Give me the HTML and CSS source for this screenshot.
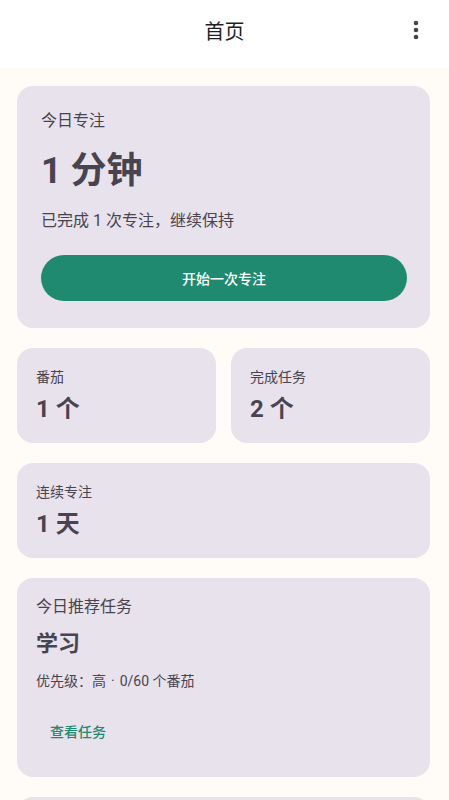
FILE: index.html
```html
<!DOCTYPE html>
<html>
<head>
<title>首页</title>
<link rel="stylesheet" href="styles.css">
</head>
<body>

<header class="topbar">
  <h1 class="topbar-title">首页</h1>
  <button class="menu-btn" aria-label="更多">
    <svg width="24" height="24" viewBox="0 0 24 24">
      <circle cx="12" cy="5" r="2.3" fill="#444"/>
      <circle cx="12" cy="12" r="2.3" fill="#444"/>
      <circle cx="12" cy="19" r="2.3" fill="#444"/>
    </svg>
  </button>
</header>

<main class="content">
  <section class="card card-focus">
    <div class="label-lg">今日专注</div>
    <div class="value-xl">1 分钟</div>
    <div class="note">已完成 1 次专注，继续保持</div>
    <button class="primary-btn">开始一次专注</button>
  </section>

  <div class="stat-row">
    <section class="card card-stat">
      <div class="label-sm">番茄</div>
      <div class="value-md">1 个</div>
    </section>
    <section class="card card-stat">
      <div class="label-sm">完成任务</div>
      <div class="value-md">2 个</div>
    </section>
  </div>

  <section class="card card-stat">
    <div class="label-sm">连续专注</div>
    <div class="value-md">1 天</div>
  </section>

  <section class="card card-task">
    <div class="label-lg">今日推荐任务</div>
    <div class="task-name">学习</div>
    <div class="meta">优先级：高<span class="dot">·</span>0/60 个番茄</div>
    <button class="text-btn">查看任务</button>
  </section>

  <section class="card card-next"></section>
</main>

</body>
</html>
```

FILE: styles.css
```css
body {
  margin: 0;
  background: #fffcf7;
  font-family: Roboto, "Noto Sans CJK SC", sans-serif;
  color: #48444f;
}

.topbar {
  height: 68px;
  background: #ffffff;
  display: flex;
  align-items: center;
  justify-content: center;
  position: relative;
}

.topbar-title {
  margin: 0 0 8px;
  font-size: 20px;
  font-weight: 400;
  color: #1f1f1f;
}

.menu-btn {
  position: absolute;
  right: 21px;
  top: 18px;
  border: 0;
  padding: 0;
  background: none;
  display: flex;
}

.content {
  padding: 18px 19px 0 17px;
  display: flex;
  flex-direction: column;
  gap: 20px;
}

.card {
  background: #e8e2ec;
  border-radius: 16px;
  display: flex;
  flex-direction: column;
}

.card-focus {
  padding: 24px 23px 27px 24px;
}

.card-stat {
  padding: 19px 19px 18px 19px;
}

.card-task {
  padding: 18px 19px 26px 19px;
}

.card-next {
  height: 60px;
}

.stat-row {
  display: grid;
  grid-template-columns: 1fr 1fr;
  gap: 15px;
}

.label-lg {
  font-size: 16px;
  line-height: 22px;
}

.label-sm {
  font-size: 14px;
  line-height: 20px;
}

.value-xl {
  margin-top: 17px;
  font-size: 36px;
  line-height: 44px;
  font-weight: 700;
}

.value-md {
  margin-top: 6px;
  font-size: 24px;
  line-height: 32px;
  font-weight: 700;
}

.task-name {
  margin-top: 11px;
  font-size: 22px;
  line-height: 30px;
  font-weight: 700;
}

.note {
  margin-top: 17px;
  font-size: 16px;
  line-height: 22px;
}

.meta {
  margin-top: 12px;
  font-size: 14px;
  line-height: 20px;
}

.dot {
  margin: 0 5px;
}

.primary-btn {
  margin-top: 23px;
  height: 46px;
  border: 0;
  border-radius: 23px;
  background: #1f8a70;
  color: #ffffff;
  font-family: inherit;
  font-size: 14px;
  font-weight: 500;
}

.text-btn {
  margin-top: 20px;
  align-self: flex-start;
  height: 40px;
  padding: 0 14px;
  border: 0;
  background: none;
  color: #1f8a70;
  font-family: inherit;
  font-size: 14px;
  font-weight: 500;
}
```
